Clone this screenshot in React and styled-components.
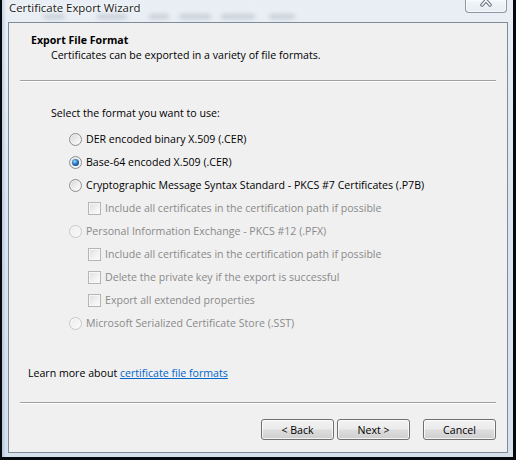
import React from 'react'
import styled, { createGlobalStyle } from 'styled-components'

const GlobalStyle = createGlobalStyle`
  html, body {
    margin: 0;
    padding: 0;
    background: #000;
  }
  body {
    font-family: "Open Sans", "Noto Sans", sans-serif;
    font-size: 10.6px;
    color: #000;
  }
`

const Window = styled.div`
  width: 516px;
  height: 460px;
  box-sizing: border-box;
  display: flex;
  flex-direction: column;
  padding: 0 5px 4px 6px;
  border-left: 2px solid #06090e;
  border-right: 3px solid #06090e;
  border-bottom: 3px solid #06090e;
  background:
    linear-gradient(90deg, rgba(120, 150, 190, 0.35) 0, rgba(255, 255, 255, 0) 4px),
    linear-gradient(180deg, #e9eff5 0%, #dde6ef 40%, #d6e1ec 100%);
`

const TitleBar = styled.div`
  position: relative;
  height: 22px;
  flex: none;
  padding-left: 1px;
  overflow: hidden;
`

const Smudges = styled.div`
  position: absolute;
  left: 0;
  top: 14px;
  display: flex;
  filter: blur(2px);
`

const Smudge = styled.span`
  width: ${p => p.$w}px;
  margin-left: ${p => p.$gap}px;
  height: 5px;
  border-radius: 3px;
  background: rgba(80, 90, 105, 0.2);
`

const Title = styled.div`
  position: relative;
  line-height: 16px;
  font-size: 11.4px;
  color: #1a1a1a;
  text-shadow: 0 0 6px #fff, 0 0 3px #fff;
`

const CloseButton = styled.div`
  position: absolute;
  right: 1px;
  top: 0;
  width: 42px;
  height: 13px;
  box-sizing: border-box;
  border: 1px solid #8d96a1;
  border-top: none;
  border-radius: 0 0 4px 4px;
  background: linear-gradient(180deg, rgba(255, 255, 255, 0.45), rgba(230, 236, 242, 0.7));
  box-shadow: inset 0 0 0 1px rgba(255, 255, 255, 0.6);
  display: flex;
  justify-content: center;
  align-items: flex-start;
  overflow: hidden;
`

const Client = styled.div`
  flex: 1;
  box-sizing: border-box;
  border: 1px solid #7e8b9a;
  background: #f0f0f0;
  display: flex;
  flex-direction: column;
`

const Header = styled.div`
  padding: 10px 0 0 22px;
  line-height: 15px;
`

const HeaderTitle = styled.div`
  font-weight: 700;
`

const HeaderText = styled.div`
  padding-left: 20px;
`

const Separator = styled.div`
  height: 1px;
  margin: ${p => p.$top}px 11px 0;
  background: #a0a0a0;
  border-bottom: 1px solid #fff;
`

const Body = styled.div`
  padding: 24px 0 0 42px;
  line-height: 15px;
`

const Options = styled.div`
  padding: 7px 0 0 18px;
  display: flex;
  flex-direction: column;
`

const Row = styled.label`
  height: 23px;
  display: flex;
  align-items: center;
  gap: 4px;
  padding-left: ${p => (p.$nested ? 19 : 0)}px;
  color: ${p => (p.$disabled ? '#8a8a8a' : '#000')};
`

const Radio = styled.span`
  width: 13px;
  height: 13px;
  flex: none;
  box-sizing: border-box;
  border-radius: 50%;
  border: 1px solid ${p => (p.$disabled ? '#c6c8ca' : '#8b8e91')};
  background: ${p =>
    p.$disabled
      ? 'linear-gradient(135deg, #ececec, #fbfbfb)'
      : 'linear-gradient(135deg, #d4d4d4 0%, #eeeeee 55%, #ffffff 100%)'};
  box-shadow: inset 0 0 0 1px ${p => (p.$disabled ? '#f6f6f6' : '#f2f2f2')};
  display: flex;
  align-items: center;
  justify-content: center;

  &::after {
    content: '';
    display: ${p => (p.$checked ? 'block' : 'none')};
    width: 7px;
    height: 7px;
    border-radius: 50%;
    background: radial-gradient(circle at 40% 35%, #a8dcff 0%, #3b8bd0 35%, #17508d 70%, #0d3563 100%);
  }
`

const Check = styled.span`
  width: 13px;
  height: 13px;
  flex: none;
  box-sizing: border-box;
  border: 1px solid #b3b5b7;
  background: linear-gradient(135deg, #dedede 0%, #f2f2f2 60%, #fdfdfd 100%);
  box-shadow: inset 0 0 0 1px #f7f7f7;
`

const LearnMore = styled.div`
  padding: 31px 0 0 19px;
  line-height: 15px;
`

const Link = styled.a`
  color: #0066cc;
  text-decoration: underline;
  cursor: pointer;
`

const Buttons = styled.div`
  display: flex;
  justify-content: flex-end;
  padding: 15px 11px 0 0;
`

const Button = styled.button`
  width: 73px;
  height: 21px;
  box-sizing: border-box;
  margin-left: ${p => p.$gap || 0}px;
  padding: 0;
  border: 1px solid #707070;
  border-radius: 3px;
  background: linear-gradient(180deg, #f2f2f2 0%, #ebebeb 48%, #dddddd 52%, #cfcfcf 100%);
  box-shadow: inset 0 0 0 1px rgba(255, 255, 255, 0.75);
  font-family: "Open Sans", "Noto Sans", sans-serif;
  font-size: 10.6px;
  color: #000;
`

const CloseGlyph = () => (
  <svg width="14" height="8" viewBox="0 0 14 8">
    <g strokeLinecap="round">
      <path d="M3 -4 L11 5 M11 -4 L3 5" stroke="#6a737e" strokeWidth="3.5" />
      <path d="M3 -4 L11 5 M11 -4 L3 5" stroke="#f4f6f8" strokeWidth="1.6" />
    </g>
  </svg>
)

// blurred menu bar of the window behind the glass: [width, gap before]
const smudges = [
  [22, 35],
  [30, 32],
  [20, 22],
  [32, 10],
  [34, 10],
  [26, 14],
]

const options = [
  { type: 'radio', label: 'DER encoded binary X.509 (.CER)' },
  { type: 'radio', label: 'Base-64 encoded X.509 (.CER)', checked: true },
  { type: 'radio', label: 'Cryptographic Message Syntax Standard - PKCS #7 Certificates (.P7B)' },
  { type: 'check', label: 'Include all certificates in the certification path if possible', disabled: true },
  { type: 'radio', label: 'Personal Information Exchange - PKCS #12 (.PFX)', disabled: true },
  { type: 'check', label: 'Include all certificates in the certification path if possible', disabled: true },
  { type: 'check', label: 'Delete the private key if the export is successful', disabled: true },
  { type: 'check', label: 'Export all extended properties', disabled: true },
  { type: 'radio', label: 'Microsoft Serialized Certificate Store (.SST)', disabled: true },
]

const App = () => (
  <>
    <GlobalStyle />
    <Window>
      <TitleBar>
        <Smudges>
          {smudges.map(([w, gap], i) => (
            <Smudge key={i} $w={w} $gap={gap} />
          ))}
        </Smudges>
        <Title>Certificate Export Wizard</Title>
        <CloseButton>
          <CloseGlyph />
        </CloseButton>
      </TitleBar>
      <Client>
        <Header>
          <HeaderTitle>Export File Format</HeaderTitle>
          <HeaderText>Certificates can be exported in a variety of file formats.</HeaderText>
        </Header>
        <Separator $top={17} />
        <Body>
          <div>Select the format you want to use:</div>
          <Options>
            {options.map((o, i) => (
              <Row key={i} $nested={o.type === 'check'} $disabled={o.disabled}>
                {o.type === 'radio' ? (
                  <Radio $checked={o.checked} $disabled={o.disabled} />
                ) : (
                  <Check />
                )}
                {o.label}
              </Row>
            ))}
          </Options>
        </Body>
        <LearnMore>
          Learn more about <Link>certificate file formats</Link>
        </LearnMore>
        <Separator $top={21} />
        <Buttons>
          <Button>&lt; Back</Button>
          <Button $gap={3}>Next &gt;</Button>
          <Button $gap={13}>Cancel</Button>
        </Buttons>
      </Client>
    </Window>
  </>
)

export default App
